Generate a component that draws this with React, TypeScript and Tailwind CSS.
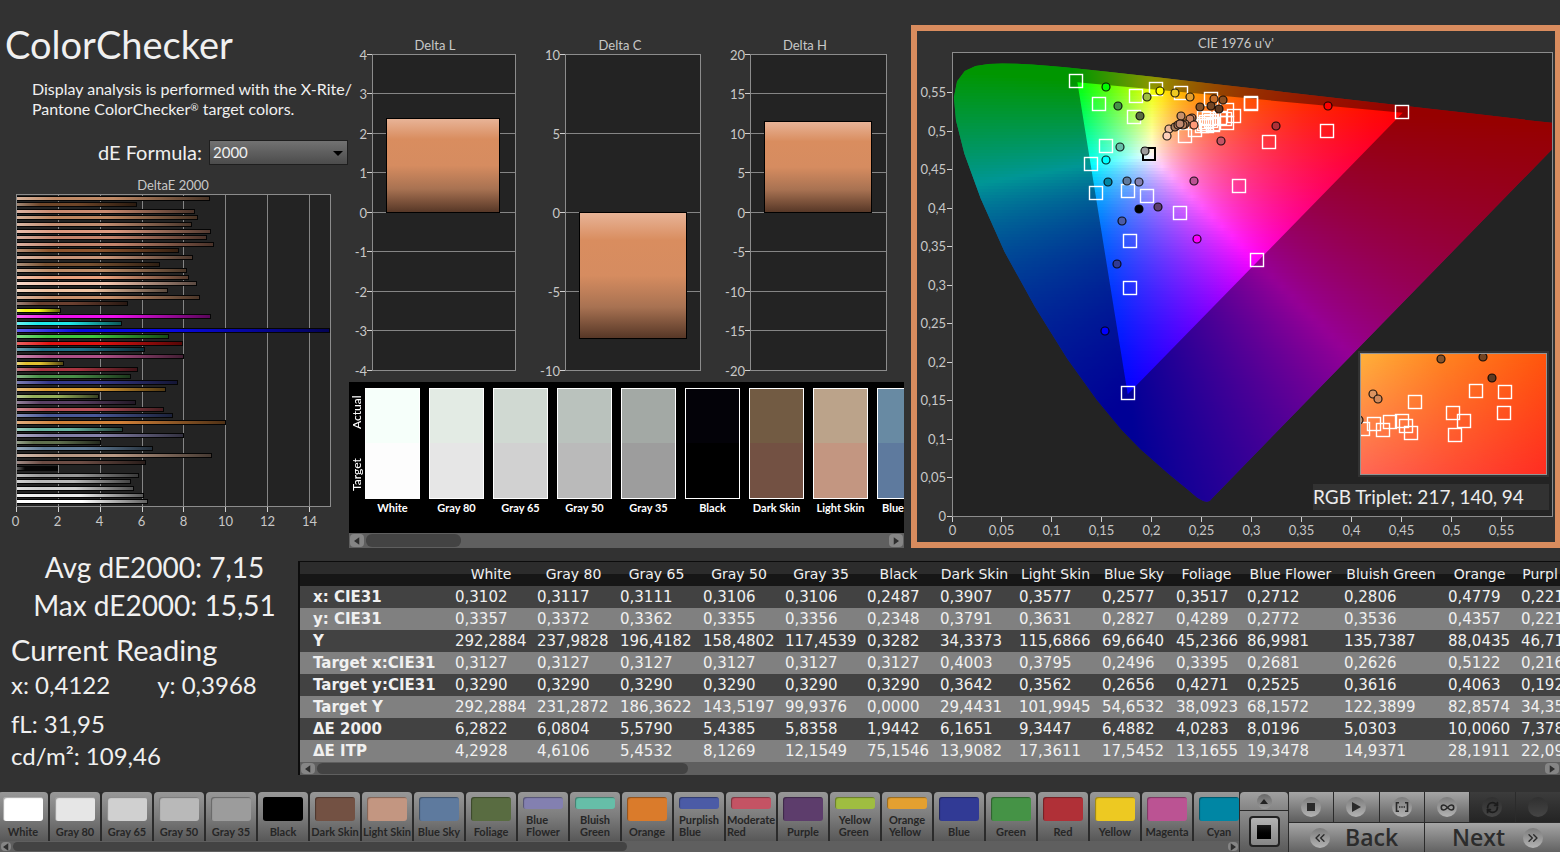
import React from "react";
import { ChevronsLeft, ChevronsRight, Infinity as InfinityIcon, RefreshCw } from "lucide-react";

/* ---------- colour patches ---------- */

type Patch = { name: string; lines?: string[]; color: string };

const patches: Patch[] = [
  { name: "White", color: "#ffffff" },
  { name: "Gray 80", color: "#e6e6e6" },
  { name: "Gray 65", color: "#d0d0d0" },
  { name: "Gray 50", color: "#b9b9b9" },
  { name: "Gray 35", color: "#9c9c9c" },
  { name: "Black", color: "#000000" },
  { name: "Dark Skin", color: "#735143" },
  { name: "Light Skin", color: "#c39681" },
  { name: "Blue Sky", color: "#5e7a9e" },
  { name: "Foliage", color: "#596c41" },
  { name: "Blue Flower", lines: ["Blue", "Flower"], color: "#8380b0" },
  { name: "Bluish Green", lines: ["Bluish", "Green"], color: "#66bea8" },
  { name: "Orange", color: "#da7b2b" },
  { name: "Purplish Blue", lines: ["Purplish", "Blue"], color: "#4b5ba6" },
  { name: "Moderate Red", lines: ["Moderate", "Red"], color: "#c45364" },
  { name: "Purple", color: "#5d3d6c" },
  { name: "Yellow Green", lines: ["Yellow", "Green"], color: "#9fbd41" },
  { name: "Orange Yellow", lines: ["Orange", "Yellow"], color: "#e4a030" },
  { name: "Blue", color: "#313a95" },
  { name: "Green", color: "#459346" },
  { name: "Red", color: "#b03037" },
  { name: "Yellow", color: "#edc922" },
  { name: "Magenta", color: "#bb5393" },
  { name: "Cyan", color: "#0086a4" },
];

const compare = [
  { name: "White", actual: "#f6fffa", target: "#fdfdfd" },
  { name: "Gray 80", actual: "#e3ebe4", target: "#e6e6e6" },
  { name: "Gray 65", actual: "#d0d9d2", target: "#d1d1d1" },
  { name: "Gray 50", actual: "#bac2bd", target: "#bababa" },
  { name: "Gray 35", actual: "#a3a9a5", target: "#9d9d9d" },
  { name: "Black", actual: "#030208", target: "#000000" },
  { name: "Dark Skin", actual: "#725b43", target: "#735143" },
  { name: "Light Skin", actual: "#bba38a", target: "#c39681" },
  { name: "Blue", actual: "#688aa3", target: "#5e7a9e" },
];

/* ---------- measurement table ---------- */

const columns = [
  "White", "Gray 80", "Gray 65", "Gray 50", "Gray 35", "Black", "Dark Skin", "Light Skin",
  "Blue Sky", "Foliage", "Blue Flower", "Bluish Green", "Orange", "Purpl",
];
const columnWidths = [82, 83, 83, 82, 82, 73, 79, 83, 74, 71, 97, 104, 73, 48];

const rows: { label: string; values: string[] }[] = [
  { label: "x: CIE31", values: ["0,3102", "0,3117", "0,3111", "0,3106", "0,3106", "0,2487", "0,3907", "0,3577", "0,2577", "0,3517", "0,2712", "0,2806", "0,4779", "0,221"] },
  { label: "y: CIE31", values: ["0,3357", "0,3372", "0,3362", "0,3355", "0,3356", "0,2348", "0,3791", "0,3631", "0,2827", "0,4289", "0,2772", "0,3536", "0,4357", "0,221"] },
  { label: "Y", values: ["292,2884", "237,9828", "196,4182", "158,4802", "117,4539", "0,3282", "34,3373", "115,6866", "69,6640", "45,2366", "86,9981", "135,7387", "88,0435", "46,71"] },
  { label: "Target x:CIE31", values: ["0,3127", "0,3127", "0,3127", "0,3127", "0,3127", "0,3127", "0,4003", "0,3795", "0,2496", "0,3395", "0,2681", "0,2626", "0,5122", "0,216"] },
  { label: "Target y:CIE31", values: ["0,3290", "0,3290", "0,3290", "0,3290", "0,3290", "0,3290", "0,3642", "0,3562", "0,2656", "0,4271", "0,2525", "0,3616", "0,4063", "0,192"] },
  { label: "Target Y", values: ["292,2884", "231,2872", "186,3622", "143,5197", "99,9376", "0,0000", "29,4431", "101,9945", "54,6532", "38,0923", "68,1572", "122,3899", "82,8574", "34,35"] },
  { label: "ΔE 2000", values: ["6,2822", "6,0804", "5,5790", "5,4385", "5,8358", "1,9442", "6,1651", "9,3447", "6,4882", "4,0283", "8,0196", "5,0303", "10,0060", "7,378"] },
  { label: "ΔE ITP", values: ["4,2928", "4,6106", "5,4532", "8,1269", "12,1549", "75,1546", "13,9082", "17,3611", "17,5452", "13,1655", "19,3478", "14,9371", "28,1911", "22,09"] },
];

/* ---------- DeltaE bar chart ---------- */

const deltaBars: [number, string][] = [
  [9.2, "#c08a66"], [5.75, "#6e4528"], [8.5, "#c98a70"], [8.65, "#bd8560"], [8.35, "#c08c70"],
  [9.25, "#dd9a80"], [9.1, "#c4846c"], [9.4, "#c2846c"], [7.75, "#8f5630"], [8.4, "#c8957a"],
  [6.85, "#7a5232"], [8.1, "#c08f6a"], [8.2, "#e8a07c"], [8.6, "#f2c4ae"], [7.2, "#f0c4a4"],
  [8.75, "#c8906c"], [5.3, "#6b4030"], [2.1, "#f5f516"], [9.25, "#ee10ee"], [5, "#20e8e8"],
  [15, "#0808e0"], [7.25, "#40c840"], [7.95, "#e01010"], [6.1, "#207088"], [8, "#b05088"],
  [2.25, "#e0c030"], [5.8, "#a83440"], [5.45, "#4a9048"], [7.7, "#34388a"], [7.1, "#dc9c34"],
  [3.9, "#96b05a"], [5.7, "#5a4064"], [7, "#b85058"], [7.45, "#485898"], [10, "#d08038"],
  [5.05, "#68b4a0"], [8, "#8480a8"], [4.03, "#60704e"], [6.49, "#607c98"], [9.34, "#b89884"],
  [6.17, "#6c4c44"], [1.94, "#060606"], [5.84, "#989898"], [5.44, "#b8b8b8"], [5.58, "#d0d0d0"],
  [6.08, "#ececec"], [6.28, "#ffffff"],
];

function DeltaEChart() {
  const left = 17;
  const right = 330;
  const unit = 20.93;
  return (
    <svg viewBox="0 178 349 356" className="block w-full" role="img" aria-label="DeltaE 2000">
      <defs>
        <linearGradient id="barShade">
          <stop offset="0" stopColor="#fff" stopOpacity="0.35" />
          <stop offset="0.2" stopColor="#fff" stopOpacity="0" />
          <stop offset="0.5" stopColor="#000" stopOpacity="0" />
          <stop offset="1" stopColor="#000" stopOpacity="0.62" />
        </linearGradient>
      </defs>
      <text x="173" y="190" textAnchor="middle" className="fill-[#c8c8c8] text-[13px]">DeltaE 2000</text>
      <rect x="16.5" y="194.5" width="314" height="312" className="fill-[#232323] stroke-[#8c8c8c]" />
      {[2, 4, 6, 8, 10, 12, 14].map((v) => (
        <line key={v} x1={Math.round(left + v * unit) - 0.5} x2={Math.round(left + v * unit) - 0.5} y1="195" y2="506" className="stroke-[#858585]" />
      ))}
      {deltaBars.map(([value, color], i) => {
        const y = Math.round(195.5 + i * 6.6);
        const w = Math.min(right - left, Math.round(value * unit));
        return (
          <g key={i}>
            <rect x={left} y={y} width={w} height="5" fill="#050505" />
            <rect x={left} y={y + 1} width={w - 1} height="3" fill={color} />
            <rect x={left} y={y + 1} width={w - 1} height="3" fill="url(#barShade)" />
          </g>
        );
      })}
      {[0, 2, 4, 6, 8, 10, 12, 14].map((v) => (
        <g key={v}>
          <line x1={Math.round(left + v * unit) - 0.5} x2={Math.round(left + v * unit) - 0.5} y1="507" y2="512" className="stroke-[#d0d0d0]" />
          <text x={15.5 + v * 21} y="526" textAnchor="middle" className="fill-[#c8c8c8] text-[13px]">{v}</text>
        </g>
      ))}
    </svg>
  );
}

/* ---------- Delta L / C / H charts ---------- */

type Column = { title: string; cx: number; x0: number; x1: number; max: number; step: number; bar: [number, number, number, number] };

const deltaCharts: Column[] = [
  { title: "Delta L", cx: 435, x0: 372, x1: 515, max: 4, step: 1, bar: [386, 118, 114, 95] },
  { title: "Delta C", cx: 620, x0: 565, x1: 700, max: 10, step: 5, bar: [579, 212, 108, 127] },
  { title: "Delta H", cx: 805, x0: 750, x1: 886, max: 20, step: 5, bar: [764, 121, 108, 92] },
];

function DeltaCharts() {
  return (
    <svg viewBox="349 0 555 382" className="block w-full" role="img" aria-label="Delta L, Delta C and Delta H">
      <defs>
        <linearGradient id="columnShade" x1="0" x2="0" y1="0" y2="1">
          <stop offset="0" stopColor="#e8b498" />
          <stop offset="0.22" stopColor="#d98d5f" />
          <stop offset="0.5" stopColor="#d68c60" />
          <stop offset="0.75" stopColor="#a87252" />
          <stop offset="1" stopColor="#553626" />
        </linearGradient>
      </defs>
      {deltaCharts.map((c) => {
        const count = (2 * c.max) / c.step;
        const ticks = Array.from({ length: count + 1 }, (_, i) => ({
          value: c.max - i * c.step,
          y: Math.floor(54 + (i * 316) / count) + 0.5,
        }));
        return (
          <g key={c.title}>
            <text x={c.cx} y="50" textAnchor="middle" className="fill-[#c8c8c8] text-[13px]">{c.title}</text>
            <rect x={c.x0 + 0.5} y="54.5" width={c.x1 - c.x0} height="316" className="fill-[#232323]" />
            {ticks.map((t) => (
              <g key={t.value}>
                <line x1={c.x0} x2={c.x1} y1={t.y} y2={t.y} className="stroke-[#858585]" />
                <line x1={c.x0 - 5} x2={c.x0} y1={t.y} y2={t.y} className="stroke-[#d0d0d0]" />
                <text x={c.x0 - 5} y={t.y + 5} textAnchor="end" className="fill-[#c8c8c8] text-[13px]">{t.value}</text>
              </g>
            ))}
            <rect x={c.x0 + 0.5} y="54.5" width={c.x1 - c.x0} height="316" className="fill-none stroke-[#8c8c8c]" />
            <rect x={c.bar[0] + 0.5} y={c.bar[1] + 0.5} width={c.bar[2] - 1} height={c.bar[3] - 1} fill="url(#columnShade)" stroke="#000" />
          </g>
        );
      })}
    </svg>
  );
}

/* ---------- CIE 1976 chart ---------- */

const px = (u: number) => 952.5 + u * 999;
const py = (v: number) => 516 - v * 771;

const locus: [number, number][] = [
  [0.2595, 0.0225], [0.2575, 0.0195], [0.2545, 0.0185], [0.251, 0.0195], [0.2451, 0.0236], [0.2347, 0.035],
  [0.2161, 0.0549], [0.1877, 0.0871], [0.169, 0.112], [0.1441, 0.151], [0.1147, 0.2044], [0.0828, 0.2708],
  [0.0521, 0.3427], [0.0282, 0.4117], [0.0119, 0.4698], [0.0035, 0.5131], [0.0014, 0.5432], [0.0046, 0.5638],
  [0.0123, 0.577], [0.0231, 0.5837], [0.036, 0.5861], [0.0501, 0.5868], [0.0643, 0.5865], [0.0792, 0.5856],
  [0.0953, 0.5841], [0.1127, 0.5821], [0.1531, 0.5766], [0.2026, 0.5694], [0.2623, 0.5604], [0.3315, 0.5501],
  [0.4035, 0.5393], [0.4691, 0.5296], [0.5203, 0.5219], [0.583, 0.5125], [0.6234, 0.5065],
];
const locusPath = "M" + locus.map(([u, v]) => `${px(u).toFixed(1)} ${py(v).toFixed(1)}`).join("L") + "Z";
const gamutPath = `M${px(0.4507)} ${py(0.5229)}L${px(0.125)} ${py(0.5625)}L${px(0.1754)} ${py(0.1579)}Z`;

function chromaColor(u: number, v: number): string {
  const d = 6 * u - 16 * v + 12;
  const x = (9 * u) / d;
  const y = (4 * v) / d;
  const z = 1 - x - y;
  const rgb = [
    3.2406 * x - 1.5372 * y - 0.4986 * z,
    -0.9689 * x + 1.8758 * y + 0.0415 * z,
    0.0557 * x - 0.204 * y + 1.057 * z,
  ].map((c) => Math.max(0, c));
  const m = Math.max(...rgb);
  return `rgb(${rgb.map((c) => Math.round(255 * Math.pow(c / m, 0.9))).join(",")})`;
}

const strips = Array.from({ length: 152 }, (_, r) => {
  const y = 60 + r * 3;
  const v = (516 - (y + 1.5)) / 771;
  return { y, stops: Array.from({ length: 61 }, (_, i) => chromaColor((i * 10 - 0.5) / 999, v)) };
});

const targets: [number, number][] = [
  [1076, 81], [1099, 104], [1136, 96], [1156, 89], [1181, 93], [1134, 117], [1106, 146], [1091, 164], [1096, 193],
  [1128, 191], [1147, 196], [1180, 213], [1130, 241], [1130, 288], [1128, 393], [1257, 260], [1239, 186],
  [1269, 142], [1327, 131], [1402, 112], [1251, 103], [1251, 104], [1211, 99], [1185, 136], [1195, 130],
  [1234, 116], [1227, 110], [1227, 123], [1225, 119], [1204, 118], [1204, 124], [1206, 122], [1207, 126],
  [1213, 124], [1211, 121], [1202, 126], [1220, 118], [1213, 125], [1209, 119],
];

const readings: [number, number, string][] = [
  [1106, 87, "#00ff00"], [1118, 106, "#459346"], [1140, 116, "#596c41"], [1147, 97, "#9fbd41"], [1160, 91, "#ffff00"],
  [1175, 93, "#edc922"], [1190, 97, "#e4a030"], [1200, 107, "#85542c"], [1214, 99, "#c86e28"], [1223, 100, "#8b5022"],
  [1211, 106, "#734523"], [1219, 109, "#5e3a22"], [1181, 116, "#c8906a"], [1192, 118, "#c98460"], [1190, 119, "#c98460"],
  [1169, 129, "#f0b898"], [1167, 136, "#ffd0b8"], [1175, 127, "#a87e5e"], [1185, 124, "#b87e5c"], [1183, 125, "#b87e5c"],
  [1178, 125, "#ba7d60"], [1180, 124, "#c08a70"], [1194, 125, "#ff9a78"], [1221, 141, "#c45364"], [1145, 151, "#9c9c9c"],
  [1120, 147, "#66bea8"], [1106, 160, "#00ffff"], [1108, 182, "#0086a4"], [1127, 181, "#5e7a9e"], [1139, 182, "#8380b0"],
  [1194, 181, "#bb5393"], [1139, 209, "#000000"], [1158, 207, "#5d3d6c"], [1122, 221, "#4b5ba6"], [1197, 239, "#ff00ff"],
  [1117, 264, "#313a95"], [1105, 331, "#0000ff"], [1328, 106, "#ff0000"], [1276, 126, "#b03037"],
];

const insetTargets: [number, number][] = [
  [1415, 402], [1476, 391], [1505, 392], [1453, 413], [1464, 421], [1504, 413], [1455, 435], [1402, 421],
  [1406, 426], [1411, 433], [1390, 422], [1383, 430], [1374, 424], [1363, 429],
];
const insetReadings: [number, number, string][] = [
  [1441, 359, "#85542c"], [1483, 357, "#734523"], [1492, 378, "#5e3a22"], [1373, 394, "#dc9460"], [1378, 399, "#d08a5c"],
  [1359, 420, "#c08a60"],
];

function Targets({ points }: { points: [number, number][] }) {
  return (
    <g fill="none" stroke="#fff" strokeWidth="1.4">
      {points.map(([x, y], i) => <rect key={i} x={x - 6.5} y={y - 6.5} width="13" height="13" />)}
    </g>
  );
}

function Readings({ points }: { points: [number, number, string][] }) {
  return (
    <g stroke="#000" strokeOpacity="0.85" strokeWidth="1.2">
      {points.map(([x, y, c], i) => <circle key={i} cx={x} cy={y} r="4" fill={c} />)}
    </g>
  );
}

function CieChart() {
  const uTicks = ["0", "0,05", "0,1", "0,15", "0,2", "0,25", "0,3", "0,35", "0,4", "0,45", "0,5", "0,55"];
  return (
    <svg viewBox="917 31 638 511" className="block w-full" role="img" aria-label="CIE 1976 u'v'">
      <defs>
        {strips.map((s, i) => (
          <linearGradient key={i} id={`strip${i}`} gradientUnits="userSpaceOnUse" x1="952" x2="1552" y1="0" y2="0">
            {s.stops.map((c, j) => <stop key={j} offset={j / 60} stopColor={c} />)}
          </linearGradient>
        ))}
        <clipPath id="plotClip"><rect x="953" y="53" width="599" height="463" /></clipPath>
        <clipPath id="locusClip"><path d={locusPath} /></clipPath>
        <clipPath id="insetClip"><rect x="1361" y="354" width="185" height="120" /></clipPath>
        <linearGradient id="insetTop"><stop offset="0" stopColor="#ffb23a" /><stop offset="0.45" stopColor="#ff8420" /><stop offset="1" stopColor="#ff560c" /></linearGradient>
        <linearGradient id="insetBottom"><stop offset="0" stopColor="#ff6656" /><stop offset="0.5" stopColor="#ff4a36" /><stop offset="1" stopColor="#ff2c22" /></linearGradient>
        <linearGradient id="insetFade" x1="0" x2="0" y1="0" y2="1"><stop offset="0" stopColor="#000" /><stop offset="1" stopColor="#fff" /></linearGradient>
        <mask id="insetMask"><rect x="1360" y="353" width="187" height="122" fill="url(#insetFade)" /></mask>
      </defs>

      <text x="1236" y="48" textAnchor="middle" className="fill-[#c8c8c8] text-[13px]">CIE 1976 u'v'</text>
      <rect x="952.5" y="52.5" width="600" height="464" className="fill-[#232323]" />

      <g clipPath="url(#plotClip)">
        <g clipPath="url(#locusClip)">
          {strips.map((s, i) => (
            <rect key={i} x="952" y={s.y} width="600" height="3" fill={`url(#strip${i})`} shapeRendering="crispEdges" />
          ))}
          <path d={`M940 40H1600V530H940Z${gamutPath}`} fillRule="evenodd" fill="#000" fillOpacity="0.41" />
        </g>
      </g>
      <rect x="952.5" y="52.5" width="600" height="464" className="fill-none stroke-[#8c8c8c]" />

      <Targets points={targets} />
      <rect x="1143" y="148" width="12" height="12" fill="none" stroke="#000" strokeWidth="2" />
      <Readings points={readings} />

      {uTicks.map((label, i) => {
        const x = Math.round(px(i * 0.05)) - 0.5;
        const y = Math.round(py(i * 0.05)) + 0.5;
        return (
          <g key={label}>
            <line x1={x} x2={x} y1="517" y2="522" className="stroke-[#d0d0d0]" />
            <text x={x} y="535" textAnchor="middle" className="fill-[#c8c8c8] text-[13px]">{label}</text>
            <line x1="947" x2="952" y1={y} y2={y} className="stroke-[#d0d0d0]" />
            <text x="946" y={y + 4.5} textAnchor="end" className="fill-[#c8c8c8] text-[13px]">{label}</text>
          </g>
        );
      })}

      <rect x="1358" y="351" width="191" height="126" fill="#323232" />
      <g clipPath="url(#insetClip)">
        <rect x="1360" y="353" width="187" height="122" fill="url(#insetTop)" />
        <rect x="1360" y="353" width="187" height="122" fill="url(#insetBottom)" mask="url(#insetMask)" />
        <Targets points={insetTargets} />
        <Readings points={insetReadings} />
      </g>
      <rect x="1360.5" y="353.5" width="186" height="121" fill="none" stroke="#949494" />

      <rect x="1313" y="484" width="236" height="26" fill="#323232" />
      <text x="1313" y="504" className="fill-[#ececec] text-[19px]">RGB Triplet: 217, 140, 94</text>
    </svg>
  );
}

/* ---------- controls ---------- */

function ScrollArrow({ dir, narrow }: { dir: "left" | "right"; narrow?: boolean }) {
  return (
    <button
      type="button"
      aria-label={`Scroll ${dir}`}
      className={`flex h-full shrink-0 items-center justify-center rounded-sm bg-[#858585] ${narrow ? "w-[10px]" : "w-[14px]"}`}
    >
      <svg viewBox="0 0 8 10" className="h-[8px] w-[6px] fill-[#2e2e2e]">
        <path d={dir === "left" ? "M7 0V10L0 5Z" : "M1 0V10L8 5Z"} />
      </svg>
    </button>
  );
}

function ScrollBar({ share, height, narrow }: { share: number; height: string; narrow?: boolean }) {
  return (
    <div className={`flex w-full items-center gap-[2px] bg-[#5f5f5f] p-px ${height}`}>
      <ScrollArrow dir="left" narrow={narrow} />
      <div className="h-full grow">
        <div className="h-full rounded-md bg-[#434343]" style={{ width: `${share}%` }} />
      </div>
      <ScrollArrow dir="right" narrow={narrow} />
    </div>
  );
}

function PatchButton({ patch }: { patch: Patch }) {
  return (
    <button
      type="button"
      className="flex h-[49px] w-[50px] shrink-0 flex-col items-center rounded-t-[4px] bg-linear-to-b from-[#989898] via-[#7c7c7c] to-[#585858] pt-[5px]"
    >
      <span
        className={`w-[40px] shrink-0 rounded-[3px] shadow-[inset_1px_1px_1px_rgba(0,0,0,0.35)] ${patch.lines ? "h-[12px]" : "h-[24px]"}`}
        style={{ backgroundColor: patch.color }}
      />
      <span className="mt-[5px] block text-left text-[11px] leading-[12px] font-bold whitespace-nowrap text-[#262626]">
        {patch.lines ? patch.lines.map((l) => <span key={l} className="block">{l}</span>) : patch.name}
      </span>
    </button>
  );
}

function Round({ children, dim }: { children?: React.ReactNode; dim?: boolean }) {
  return (
    <span
      className={`flex size-[20px] items-center justify-center rounded-full ${
        dim ? "bg-linear-to-b from-[#303030] to-[#454545] text-[#1c1c1c]" : "bg-linear-to-b from-[#7c7c7c] to-[#b4b4b4] text-[#2a2a2a]"
      }`}
    >
      {children}
    </span>
  );
}

const transport: { label: string; dim?: boolean; icon?: React.ReactNode }[] = [
  { label: "Stop", icon: <svg viewBox="0 0 8 8" className="size-[8px] fill-current"><rect width="8" height="8" /></svg> },
  { label: "Play", icon: <svg viewBox="0 0 9 10" className="ml-px h-[10px] w-[9px] fill-current"><path d="M0 0L9 5L0 10Z" /></svg> },
  {
    label: "Read series",
    icon: (
      <svg viewBox="0 0 14 10" className="h-[10px] w-[14px] fill-none stroke-current" strokeWidth="1.6">
        <path d="M4 .8H1.5V9.2H4M10 .8H12.5V9.2H10" />
        <path d="M4 5H10" strokeDasharray="1.4 .9" />
      </svg>
    ),
  },
  { label: "Read continuously", icon: <InfinityIcon size={15} strokeWidth={2.5} /> },
  { label: "Refresh", dim: true, icon: <RefreshCw size={13} strokeWidth={3.4} /> },
  { label: "Record", dim: true },
];

function Toolbar() {
  return (
    <footer className="mt-auto flex h-[60px] w-full shrink-0 bg-[#2b2b2b]">
      <div className="flex min-w-0 grow flex-col overflow-hidden">
        <div className="-ml-[2px] flex gap-[2px] overflow-hidden">
          {patches.map((p) => <PatchButton key={p.name} patch={p} />)}
        </div>
        <ScrollBar share={50.6} height="h-[11px]" narrow />
      </div>
      <div className="ml-px flex w-[48px] shrink-0 flex-col gap-px">
        <button type="button" aria-label="Expand" className="flex h-[18px] items-center justify-center rounded-t-[4px] bg-linear-to-b from-[#a0a0a0] to-[#848484]">
          <span className="flex size-[15px] items-center justify-center rounded-full bg-linear-to-b from-[#686868] to-[#9a9a9a]">
            <svg viewBox="0 0 8 5" className="h-[5px] w-[8px] fill-[#222]"><path d="M0 5L4 0L8 5Z" /></svg>
          </span>
        </button>
        <button type="button" aria-label="Show patch" className="flex grow items-center justify-center bg-linear-to-b from-[#8e8e8e] to-[#5a5a5a]">
          <span className="flex size-[31px] items-center justify-center rounded-[4px] border-2 border-[#222] bg-linear-to-b from-[#b4b4b4] to-[#868686]">
            <span className="size-[14px] bg-linear-to-b from-[#1c1c1c] to-black" />
          </span>
        </button>
      </div>
      <div className="ml-px grid w-[271px] shrink-0 grid-rows-[30px_29px] gap-y-px">
        <div className="grid grid-cols-6 gap-px">
          {transport.map((t) => (
            <button
              key={t.label}
              type="button"
              aria-label={t.label}
              disabled={t.dim}
              className={`flex items-center justify-center ${
                t.dim ? "bg-linear-to-b from-[#3c3c3c] to-[#242424]" : "bg-linear-to-b from-[#a6a6a6] to-[#5e5e5e]"
              }`}
            >
              <Round dim={t.dim}>{t.icon}</Round>
            </button>
          ))}
        </div>
        <div className="grid grid-cols-2 gap-px font-['Open_Sans',sans-serif] text-[23px] leading-none font-semibold text-[#2c2c2c]">
          <button type="button" className="flex items-center gap-[15px] bg-linear-to-b from-[#a6a6a6] to-[#626262] pl-[21px]">
            <Round><ChevronsLeft size={16} strokeWidth={2} /></Round>
            Back
          </button>
          <button type="button" className="flex items-center justify-end gap-[18px] bg-linear-to-b from-[#a6a6a6] to-[#626262] pr-[17px]">
            Next
            <Round><ChevronsRight size={16} strokeWidth={2} /></Round>
          </button>
        </div>
      </div>
    </footer>
  );
}

function Comparison() {
  return (
    <section className="flex w-full min-w-0 flex-col">
      <div className="flex h-[151px] overflow-hidden bg-black pt-[6px]">
        <div className="flex h-[111px] w-[16px] shrink-0 flex-col text-[12px] leading-[16px] font-medium text-white">
          <span className="flex h-[48px] rotate-180 items-center justify-center [writing-mode:vertical-rl]">Actual</span>
          <span className="mt-[15px] flex h-[48px] rotate-180 items-center justify-center [writing-mode:vertical-rl]">Target</span>
        </div>
        <div className="flex gap-[9px]">
          {compare.map((c) => (
            <figure key={c.name} className={`flex w-[55px] shrink-0 flex-col ${c.name === "Blue" ? "items-start" : "items-center"}`}>
              <div className="flex h-[111px] w-full flex-col border border-white">
                <div className="grow" style={{ backgroundColor: c.actual }} />
                <div className="h-[55px]" style={{ backgroundColor: c.target }} />
              </div>
              <figcaption className={`mt-px text-[11px] leading-[16px] font-bold whitespace-nowrap text-white ${c.name === "Blue" ? "pl-[5px]" : ""}`}>{c.name}</figcaption>
            </figure>
          ))}
        </div>
      </div>
      <ScrollBar share={18.2} height="h-[15px]" />
    </section>
  );
}

function ReadingsTable() {
  return (
    <section className="min-w-0 grow overflow-hidden border-t border-l-2 border-[#0c0c0c]">
      <table className="w-[1264px] table-fixed border-collapse font-['DejaVu_Sans',sans-serif] text-[#f0f0f0]">
        <colgroup>
          <col className="w-[150px]" />
          {columnWidths.map((w, i) => <col key={i} style={{ width: w }} />)}
        </colgroup>
        <thead>
          <tr className="h-[24px] bg-linear-to-b from-[#2c2c2c] from-50% to-[#161616] to-50% text-[14px] leading-[20px]">
            <td />
            {columns.map((c) => <th key={c} scope="col" className="overflow-hidden p-0 text-center font-normal whitespace-nowrap">{c}</th>)}
          </tr>
        </thead>
        <tbody>
          {rows.map((r) => (
            <tr key={r.label} className="h-[22px] text-[15px] leading-[20px] odd:bg-[#424242] even:bg-[#808080]">
              <th scope="row" className="p-0 pl-[13px] text-left font-bold whitespace-nowrap">{r.label}</th>
              {r.values.map((v, i) => <td key={i} className="overflow-hidden p-0 pl-[5px] whitespace-nowrap">{v}</td>)}
            </tr>
          ))}
        </tbody>
      </table>
      <ScrollBar share={30.3} height="h-[13px]" />
    </section>
  );
}

export default function App() {
  return (
    <div className="flex min-h-screen w-full flex-col overflow-hidden bg-[#323232] font-['Lato',sans-serif] text-[#f0f0f0]">
      <main className="grid w-full grid-cols-[minmax(0,349fr)_minmax(0,555fr)_minmax(0,656fr)] items-start">
        <section className="flex flex-col">
          <h1 className="mt-[19px] pl-[5px] text-[38px] leading-[50px]">ColorChecker</h1>
          <p className="mt-[10px] pl-[32px] text-[16px] leading-[20px] whitespace-nowrap">
            Display analysis is performed with the X-Rite/
            <br />
            Pantone ColorChecker<span className="align-[4px] text-[10px] leading-none">®</span> target colors.
          </p>
          <div className="mt-[21px] mb-[13px] flex items-center justify-end gap-[7px] pr-px">
            <label htmlFor="formula" className="text-[20px] leading-[25px]">dE Formula:</label>
            <div className="relative">
              <select
                id="formula"
                defaultValue="2000"
                className="block h-[25px] w-[139px] appearance-none border border-[#1e1e1e] bg-linear-to-b from-[#727272] to-[#4c4c4c] pl-[3px] text-[15px] leading-[23px] text-[#f0f0f0]"
              >
                <option>2000</option>
              </select>
              <svg viewBox="0 0 10 5" className="pointer-events-none absolute top-[11px] right-[5px] h-[5px] w-[10px] fill-black"><path d="M0 0H10L5 5Z" /></svg>
            </div>
          </div>
          <DeltaEChart />
        </section>
        <section className="flex flex-col">
          <DeltaCharts />
          <Comparison />
        </section>
        <section className="mt-[25px] ml-[7px] border-6 border-r-5 border-[#d98c5e]">
          <CieChart />
        </section>
      </main>

      <div className="mt-[13px] mb-[16px] flex w-full items-start">
        <section className="flex w-[298px] shrink-0 flex-col pl-[11px] whitespace-nowrap">
          <p className="-mt-[13px] text-center text-[28px] leading-[38px]">Avg dE2000: 7,15</p>
          <p className="text-center text-[28px] leading-[38px]">Max dE2000: 15,51</p>
          <h2 className="mt-[7px] text-[29px] leading-[38px]">Current Reading</h2>
          <p className="flex gap-[47px] text-[24px] leading-[32px]"><span>x: 0,4122</span><span>y: 0,3968</span></p>
          <p className="mt-[7px] text-[24px] leading-[32px]">fL: 31,95</p>
          <p className="text-[24px] leading-[32px]">cd/m²: 109,46</p>
        </section>
        <ReadingsTable />
      </div>
      <Toolbar />
    </div>
  );
}
